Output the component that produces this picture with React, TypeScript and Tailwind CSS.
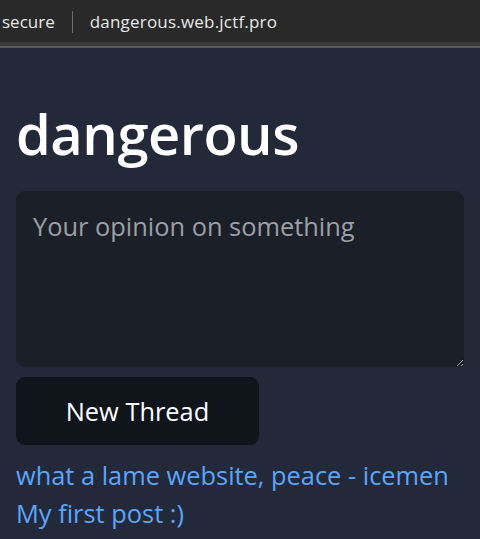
export default function App() {
  return (
    <div className="flex min-h-[539px] flex-col bg-[#232938] font-['Open_Sans',sans-serif]">
      {/* Browser address bar */}
      <div className="flex h-[42px] items-center bg-[#292929] pt-[2px] text-[17px] text-[#e8e8e8]">
        <span className="pl-[2px]">secure</span>
        <span className="mx-[17px] h-[22px] w-px bg-[#6e6e6e]" />
        <span className="tracking-[0.2px]">dangerous.web.jctf.pro</span>
      </div>
      <div className="h-[4px] bg-[#3a3a3a]" />
      <div className="h-[2px] bg-[#595959]" />

      <main className="flex flex-col px-4">
        <h1 className="mt-[52px] text-[56px] font-semibold leading-[1.2] tracking-[-0.5px] text-white">
          dangerous
        </h1>
        <textarea
          placeholder="Your opinion on something"
          className="mt-[24px] h-[176px] w-full rounded-[9px] bg-[#1b1f27] px-[17px] py-[18px] text-[25.4px] leading-[1.4] text-white outline-none placeholder:text-[#9ba0a6]"
        />
        <button className="mt-[10px] h-[68px] w-[243px] rounded-[9px] bg-[#10151c] text-[25.4px] text-white">
          New Thread
        </button>
        <div className="mt-[11px] flex flex-col text-[25.4px] leading-[38px] text-[#58a6ff]">
          <a href="#">what a lame website, peace - icemen</a>
          <a href="#">My first post :)</a>
        </div>
      </main>
    </div>
  );
}
